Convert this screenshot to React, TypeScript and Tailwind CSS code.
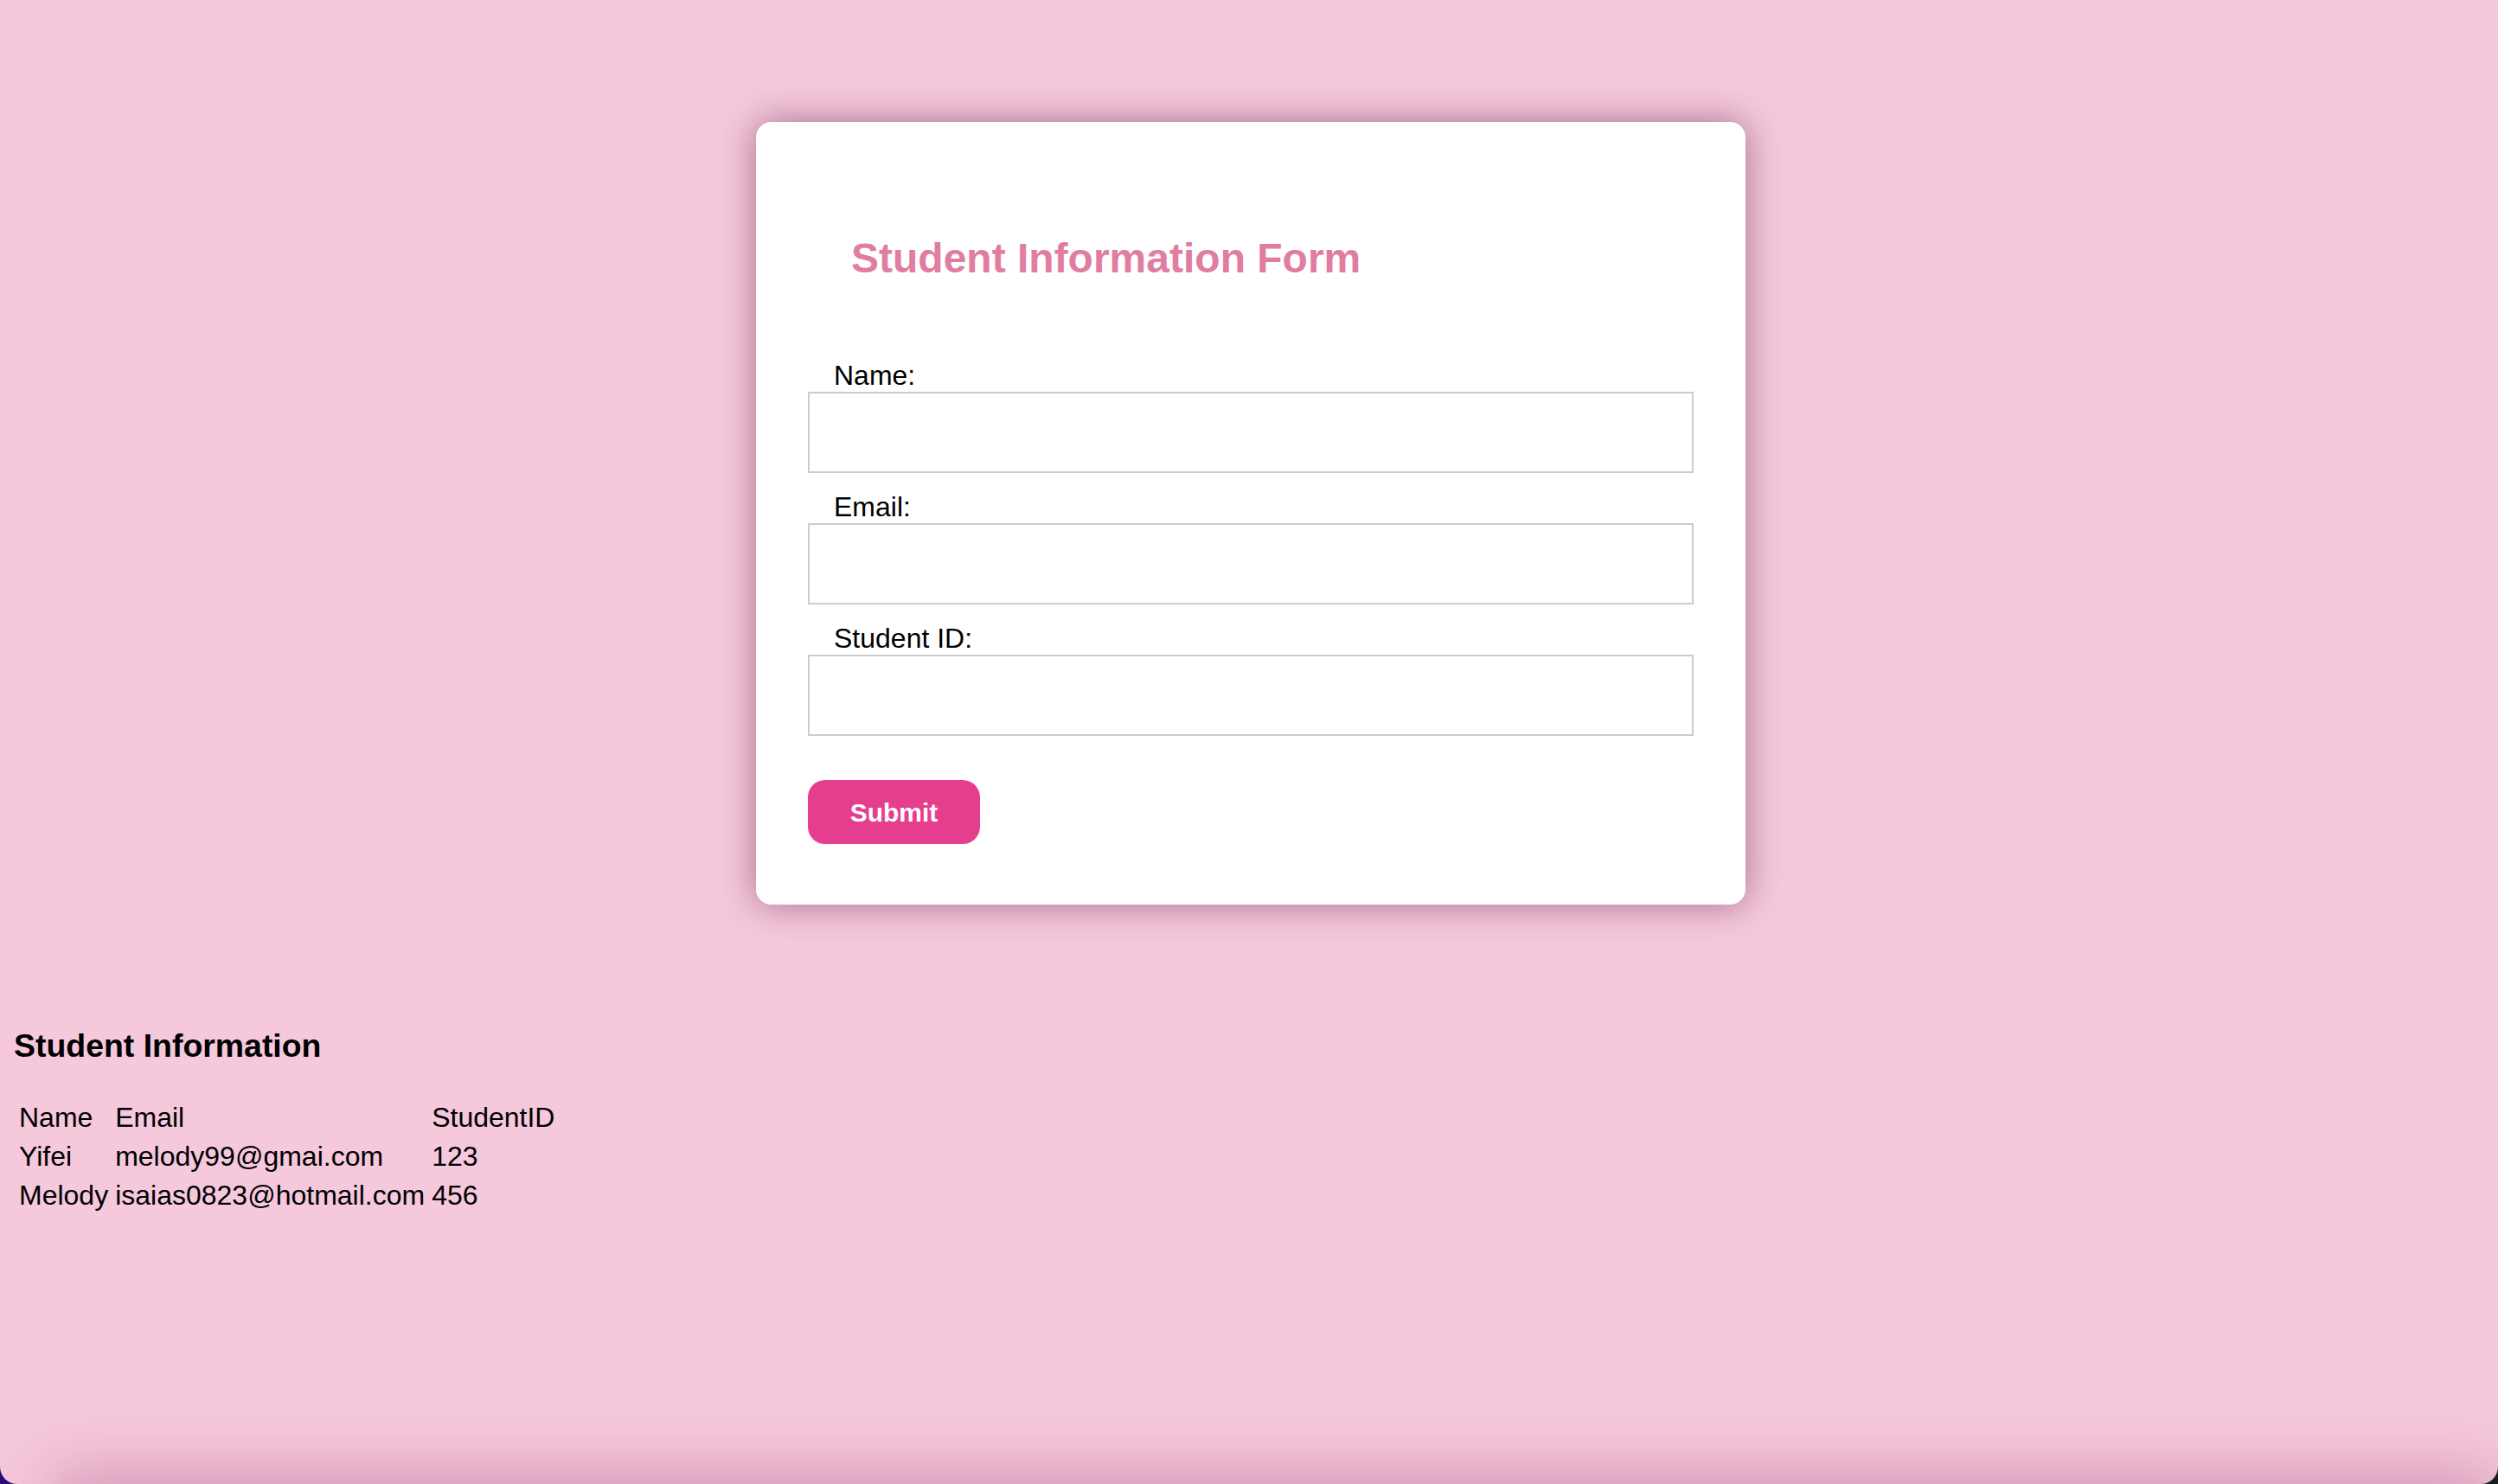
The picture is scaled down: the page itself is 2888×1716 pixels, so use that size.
import React from 'react';

const students = [
  { name: 'Yifei', email: 'melody99@gmai.com', id: '123' },
  { name: 'Melody', email: 'isaias0823@hotmail.com', id: '456' },
];

const fields = [
  { id: 'name', label: 'Name:', type: 'text' },
  { id: 'email', label: 'Email:', type: 'email' },
  { id: 'studentId', label: 'Student ID:', type: 'text' },
];

export default function App() {
  return (
    <div className="h-[1716px] w-full bg-[linear-gradient(90deg,#2a0b78,#2a0b78_40%,#14201c_60%,#14201c)]">
      <div className="relative h-[1716px] w-full overflow-hidden rounded-b-[20px] bg-[#f5c8dc] px-[16px] font-['Liberation_Sans',Arial,sans-serif] text-black">
        <div className="pt-[141px] pl-[4px]">
          <div className="mx-auto w-[1144px] rounded-[18px] bg-white px-[60px] pt-[130px] pb-[70px] shadow-[0_0_40px_rgba(90,25,55,0.5)]">
            <h2 className="ml-[50px] text-[48px] font-bold leading-[55px] text-[#e07da0]">
              Student Information Form
            </h2>
            <form className="mt-[90px]" onSubmit={(e) => e.preventDefault()}>
              {fields.map((f, i) => (
                <div key={f.id} className={i === 0 ? '' : 'mt-[21px]'}>
                  <label htmlFor={f.id} className="block pl-[30px] text-[32px] leading-[37px]">
                    {f.label}
                  </label>
                  <input
                    id={f.id}
                    type={f.type}
                    className="block h-[94px] w-full border-2 border-[#cccccc] bg-white px-[16px] text-[32px] outline-none"
                  />
                </div>
              ))}
              <button
                type="submit"
                className="mt-[51px] h-[74px] w-[199px] rounded-[20px] bg-[#e53e8e] text-[30px] font-bold text-white"
              >
                Submit
              </button>
            </form>
          </div>
        </div>

        <h3 className="mt-[142px] text-[37.44px] font-bold leading-[43px]">Student Information</h3>
        <table className="mt-[37px] border-separate border-spacing-[4px] text-[32px] leading-[37px]">
          <thead>
            <tr>
              <td className="p-[2px]">Name</td>
              <td className="p-[2px]">Email</td>
              <td className="p-[2px]">StudentID</td>
            </tr>
          </thead>
          <tbody>
            {students.map((s) => (
              <tr key={s.id}>
                <td className="p-[2px]">{s.name}</td>
                <td className="p-[2px]">{s.email}</td>
                <td className="p-[2px]">{s.id}</td>
              </tr>
            ))}
          </tbody>
        </table>

        {/* soft shade along the bottom edge */}
        <div className="pointer-events-none absolute bottom-[-50px] left-[70px] right-[10px] h-[50px] shadow-[0_0_70px_10px_rgba(140,50,95,0.35)]" />
      </div>
    </div>
  );
}
